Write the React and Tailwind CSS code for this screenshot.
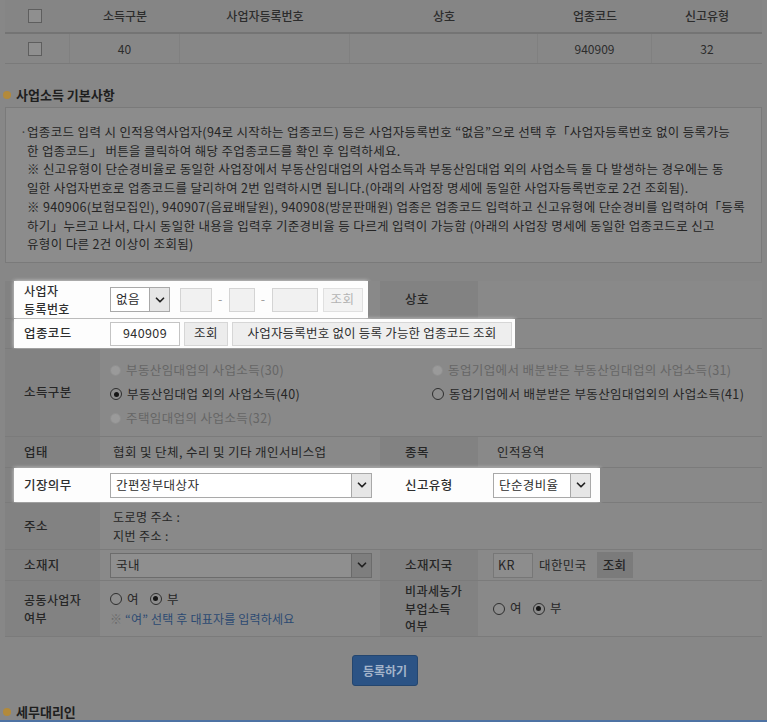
import { ChevronDown } from "lucide-react";

function Check() {
  return <span className="block w-[14px] h-[14px] border border-[#5e5e5e] bg-[#8f8f8f]" />;
}

function Radio({ on, off, light }) {
  if (off) {
    return <span className="inline-block w-[11px] h-[11px] rounded-full bg-[#9a9a9a] border border-[#8f8f8f]" />;
  }
  return (
    <span
      className={`inline-flex items-center justify-center w-[12px] h-[12px] rounded-full border ${
        light ? "border-[#555] bg-white" : "border-[#2e2e2e] bg-[#8d8d8d]"
      }`}
    >
      {on && <span className="w-[5px] h-[5px] rounded-full bg-[#151515]" />}
    </span>
  );
}

function Arrow({ dim }) {
  return (
    <span
      className={`flex items-center justify-center w-[20px] h-full border-l ${
        dim ? "border-[#6a6a6a] bg-[#7e7e7e]" : "border-[#a8a8a8] bg-[#e6e6e6]"
      }`}
    >
      <ChevronDown size={14} strokeWidth={3} className="text-[#222]" />
    </span>
  );
}

function Select({ text, width, dim }) {
  return (
    <div
      className={`flex items-center h-[25px] border ${width} ${
        dim ? "border-[#6c6c6c] bg-[#8f8f8f]" : "border-[#a9a9a9] bg-white"
      }`}
    >
      <span className="flex-1 pl-[5px] truncate">{text}</span>
      <Arrow dim={dim} />
    </div>
  );
}

const notice = [
  "업종코드 입력 시 인적용역사업자(94로 시작하는 업종코드) 등은 사업자등록번호 “없음”으로 선택 후「사업자등록번호 없이 등록가능",
  "한 업종코드」 버튼을 클릭하여 해당 주업종코드를 확인 후 입력하세요.",
  "※ 신고유형이 단순경비율로 동일한 사업장에서 부동산임대업의 사업소득과 부동산임대업 외의 사업소득 둘 다 발생하는 경우에는 동",
  "일한 사업자번호로 업종코드를 달리하여 2번 입력하시면 됩니다.(아래의 사업장 명세에 동일한 사업자등록번호로 2건 조회됨).",
  "※ 940906(보험모집인), 940907(음료배달원), 940908(방문판매원) 업종은 업종코드 입력하고 신고유형에 단순경비를 입력하여「등록",
  "하기」누르고 나서, 다시 동일한 내용을 입력후 기준경비율 등 다르게 입력이 가능함 (아래의 사업장 명세에 동일한 업종코드로 신고",
  "유형이 다른 2건 이상이 조회됨)",
];

export default function App() {
  const lbl = "bg-[#828282] font-medium";
  const val = "bg-[#898989]";
  const row = "flex shrink-0 border-b border-[#7b7b7b]";
  return (
    <div className="w-[767px] h-[722px] overflow-hidden bg-[#878787] text-[#262626] font-['Noto_Sans_CJK_KR','Noto_Sans',sans-serif] flex flex-col">
      {/* list table */}
      <div className="mx-[5px] text-[12px] font-medium shrink-0">
        <div className="grid grid-cols-[65px_110px_170px_188px_114px_1fr] h-[34px] items-center border-b-2 border-[#747474] bg-[#858585] text-center text-[#2c2c2c]">
          <div className="flex justify-center pr-[5px]"><Check /></div>
          <div>소득구분</div>
          <div>사업자등록번호</div>
          <div>상호</div>
          <div>업종코드</div>
          <div>신고유형</div>
        </div>
        <div className="grid grid-cols-[65px_110px_170px_188px_114px_1fr] h-[30px] border-b border-[#7a7a7a] text-center text-[#2c2c2c] font-normal">
          <div className="flex items-center justify-center pr-[5px] border-r border-[#808080]"><Check /></div>
          <div className="flex items-center justify-center border-r border-[#808080]">40</div>
          <div className="border-r border-[#808080]" />
          <div className="border-r border-[#808080]" />
          <div className="flex items-center justify-center border-r border-[#808080]">940909</div>
          <div className="flex items-center justify-center">32</div>
        </div>
      </div>

      {/* section title */}
      <div className="mt-[21px] h-[20px] shrink-0 flex items-center gap-[5px] pl-[3px]">
        <span className="w-[8px] h-[8px] rounded-full bg-[#b38a3a]" />
        <span className="text-[13px] font-bold text-[#1e1e1e]">사업소득 기본사항</span>
      </div>

      {/* notice box */}
      <div className="mx-[5px] mt-[2px] h-[156px] shrink-0 border border-[#7a7a7a] bg-[#8c8c8c] pt-[15px] pl-[14px] text-[12.5px] tracking-[0.35px] leading-[18.7px] text-[#242424]">
        {notice.map((line, i) => (
          <div key={i} className="flex whitespace-nowrap">
            <span className="w-[7px] text-[#444]">{i === 0 ? "·" : ""}</span>
            <span>{line}</span>
          </div>
        ))}
      </div>

      {/* form */}
      <div className="mx-[5px] mt-[18px] text-[12.5px] tracking-[0.4px] shrink-0">
        {/* 사업자등록번호 */}
        <div className={`${row} h-[38px]`}>
          <div className={`w-[9px] ${lbl}`} />
          <div className="flex w-[354px] bg-[#fdfdfd] text-[#2e2e2e] shadow-[0_0_4px_rgba(255,255,255,0.7)]">
            <div className="w-[86px] pl-[10px] flex flex-col justify-center text-[12px] leading-[17.5px] font-medium">
              <span>사업자</span>
              <span>등록번호</span>
            </div>
            <div className="flex items-center pl-[10px] gap-[6px] text-[#999]">
              <div className="mr-[4px] text-[#2e2e2e]"><Select text="없음" width="w-[60px]" /></div>
              <span className="w-[32px] h-[24px] border border-[#d4d4d4] bg-[#f1f1f1]" />
              <span>-</span>
              <span className="w-[26px] h-[24px] border border-[#d4d4d4] bg-[#f1f1f1]" />
              <span>-</span>
              <span className="w-[46px] h-[24px] border border-[#d4d4d4] bg-[#f1f1f1]" />
              <span className="ml-[-1px] w-[40px] h-[24px] flex items-center justify-center border border-[#e0e0e0] bg-[#f3f3f3] text-[#b3b3b3]">조회</span>
            </div>
          </div>
          <div className={`w-[12px] ${val}`} />
          <div className={`w-[98px] pl-[25px] flex items-center ${lbl}`}>상호</div>
          <div className={`flex-1 ${val}`} />
        </div>

        {/* 업종코드 */}
        <div className={`${row} h-[30px]`}>
          <div className={`w-[9px] ${lbl}`} />
          <div className="flex w-[501px] bg-[#fdfdfd] text-[#2e2e2e] shadow-[0_0_4px_rgba(255,255,255,0.7)]">
            <div className="w-[86px] pl-[10px] flex items-center font-medium">업종코드</div>
            <div className="flex items-center pl-[10px] gap-[4px]">
              <span className="w-[70px] h-[24px] flex items-center justify-center border border-[#c4c4c4] bg-white">940909</span>
              <span className="w-[44px] h-[24px] flex items-center justify-center border border-[#d6d6d6] bg-[#ececec]">조회</span>
              <span className="w-[280px] h-[24px] flex items-center justify-center border border-[#d6d6d6] bg-[#eeeeee] tracking-[0.2px]">
                사업자등록번호 없이 등록 가능한 업종코드 조회
              </span>
            </div>
          </div>
          <div className={`flex-1 ${val}`} />
        </div>

        {/* 소득구분 */}
        <div className={`${row} h-[88px]`}>
          <div className={`w-[95px] pl-[19px] flex items-center ${lbl}`}>소득구분</div>
          <div className={`flex-1 pl-[10px] pt-[9px] grid grid-cols-[322px_1fr] auto-rows-[24px] ${val}`}>
            <div className="flex items-center gap-[5px] text-[#666]">
              <Radio off />
              <span>부동산임대업의 사업소득(30)</span>
            </div>
            <div className="flex items-center gap-[5px] text-[#666]">
              <Radio off />
              <span>동업기업에서 배분받은 부동산임대업의 사업소득(31)</span>
            </div>
            <div className="flex items-center gap-[5px]">
              <Radio on />
              <span>부동산임대업 외의 사업소득(40)</span>
            </div>
            <div className="flex items-center gap-[5px]">
              <Radio />
              <span>동업기업에서 배분받은 부동산임대업외의 사업소득(41)</span>
            </div>
            <div className="flex items-center gap-[5px] text-[#666]">
              <Radio off />
              <span>주택임대업의 사업소득(32)</span>
            </div>
          </div>
        </div>

        {/* 업태 */}
        <div className={`${row} h-[31px]`}>
          <div className={`w-[95px] pl-[19px] flex items-center ${lbl}`}>업태</div>
          <div className={`w-[280px] pl-[13px] flex items-center ${val}`}>협회 및 단체, 수리 및 기타 개인서비스업</div>
          <div className={`w-[98px] pl-[25px] flex items-center ${lbl}`}>종목</div>
          <div className={`flex-1 pl-[19px] flex items-center ${val}`}>인적용역</div>
        </div>

        {/* 기장의무 */}
        <div className={`${row} h-[35px]`}>
          <div className={`w-[9px] ${lbl}`} />
          <div className="flex w-[586px] bg-[#fdfdfd] text-[#2e2e2e] shadow-[0_0_4px_rgba(255,255,255,0.7)]">
            <div className="w-[86px] pl-[10px] flex items-center font-medium">기장의무</div>
            <div className="w-[280px] pl-[10px] flex items-center">
              <Select text="간편장부대상자" width="w-[262px]" />
            </div>
            <div className="w-[98px] pl-[25px] flex items-center font-medium">신고유형</div>
            <div className="flex-1 pl-[15px] flex items-center">
              <Select text="단순경비율" width="w-[98px]" />
            </div>
          </div>
          <div className={`flex-1 ${val}`} />
        </div>

        {/* 주소 */}
        <div className={`${row} h-[47px]`}>
          <div className={`w-[95px] pl-[19px] flex items-center ${lbl}`}>주소</div>
          <div className={`flex-1 pl-[13px] flex flex-col justify-center text-[12px] leading-[19px] ${val}`}>
            <span>도로명 주소 :</span>
            <span>지번 주소 :</span>
          </div>
        </div>

        {/* 소재지 */}
        <div className={`${row} h-[31px]`}>
          <div className={`w-[95px] pl-[19px] flex items-center ${lbl}`}>소재지</div>
          <div className={`w-[280px] pl-[10px] flex items-center ${val}`}>
            <Select text="국내" width="w-[262px]" dim />
          </div>
          <div className={`w-[98px] pl-[25px] flex items-center ${lbl}`}>소재지국</div>
          <div className={`flex-1 pl-[15px] flex items-center gap-[6px] ${val}`}>
            <span className="w-[40px] h-[25px] pl-[4px] flex items-center border border-[#777] bg-[#8d8d8d]">KR</span>
            <span>대한민국</span>
            <span className="ml-[4px] w-[36px] h-[26px] flex items-center justify-center bg-[#7b7b7b] font-medium">조회</span>
          </div>
        </div>

        {/* 공동사업자 */}
        <div className={`${row} h-[56px]`}>
          <div className={`w-[95px] pl-[19px] flex flex-col justify-center text-[12px] leading-[17.5px] ${lbl}`}>
            <span>공동사업자</span>
            <span>여부</span>
          </div>
          <div className={`w-[280px] pl-[10px] flex flex-col justify-center leading-[20px] ${val}`}>
            <div className="flex items-center gap-[5px]">
              <Radio />
              <span className="mr-[6px]">여</span>
              <Radio on />
              <span>부</span>
            </div>
            <div className="text-[12px] tracking-[0.2px]">
              <span className="text-[#6a6a6a]">※ </span>
              <span className="text-[#2c4a72]">“여” 선택 후 대표자를 입력하세요</span>
            </div>
          </div>
          <div className={`w-[98px] pl-[25px] flex flex-col justify-center text-[12px] leading-[17.5px] ${lbl}`}>
            <span>비과세농가</span>
            <span>부업소득</span>
            <span>여부</span>
          </div>
          <div className={`flex-1 pl-[15px] flex items-center gap-[5px] ${val}`}>
            <Radio />
            <span className="mr-[6px]">여</span>
            <Radio on />
            <span>부</span>
          </div>
        </div>
      </div>

      {/* submit */}
      <div className="mt-[18px] shrink-0 flex justify-center pl-[3px]">
        <button className="w-[66px] h-[31px] rounded-[3px] bg-[#2b5385] border border-[#24466f] text-[12px] font-bold text-[#a4b5cb]">
          등록하기
        </button>
      </div>

      {/* next section */}
      <div className="mt-[18px] h-[16px] shrink-0 flex items-center gap-[5px] pl-[3px]">
        <span className="w-[8px] h-[8px] rounded-full bg-[#b38a3a]" />
        <span className="text-[13px] font-bold text-[#1e1e1e]">세무대리인</span>
      </div>
      <div className="mt-auto h-[2px] shrink-0 bg-[#4d72a3]" />
    </div>
  );
}
